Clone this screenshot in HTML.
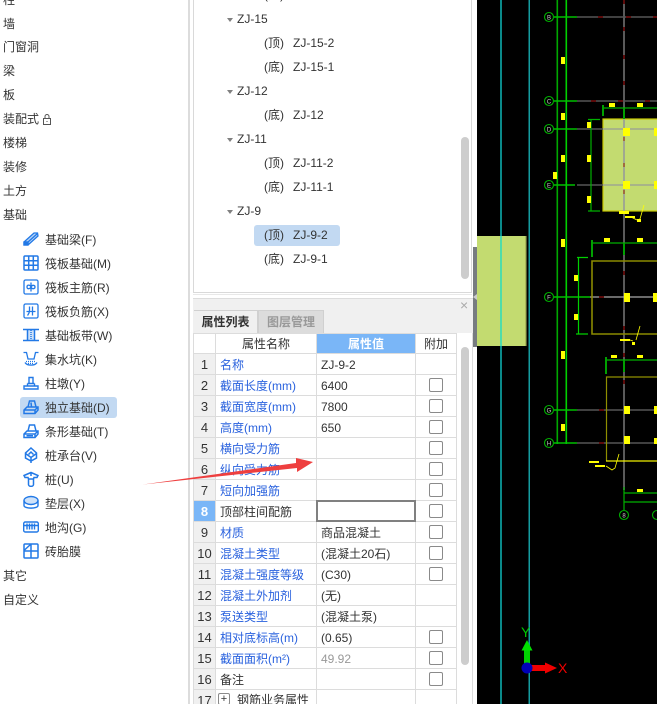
<!DOCTYPE html>
<html><head><meta charset="utf-8"><style>
html,body{margin:0;padding:0;background:#fff;width:657px;height:704px;overflow:hidden}
body{font:12px/20px "Liberation Sans","Noto Sans CJK SC",sans-serif;color:#333}
#w{position:absolute;left:0;top:0;width:657px;height:704px;overflow:hidden;background:#fff}
.t{position:absolute;white-space:nowrap;line-height:20px}
.a{position:absolute}
.ic{position:absolute;left:23px;width:16px;height:16px;fill:none;stroke:#2279e6;stroke-width:1.300}
table{position:absolute;left:193px;top:333px;border-collapse:collapse;table-layout:fixed;width:263px;font-size:12px}
td{border:1px solid #dcdcdc;padding:1px 0 0 4px;height:19px;line-height:18px;white-space:nowrap;overflow:hidden;background:#fff}
td.n{background:#f0f0f0;text-align:center;padding:1px 0 0;font-size:13px}
td.b{color:#2a62de}
td.c{padding:0;height:20px}
td.h{text-align:center;padding:0;height:19px}
i.k{display:block;width:12px;height:12px;border:1px solid #8a8a8a;border-radius:2px;margin:0 auto;background:#fff}
.tri{position:absolute;left:227px;width:0;height:0;border-left:3.500px solid transparent;border-right:3.500px solid transparent;border-top:4px solid #808080}
</style></head><body><div id="w">

<!-- left panel -->
<div class="a" style="left:188px;top:0;width:2px;height:704px;background:#dcdcdc"></div>
<div class="t" style="left:3px;top:-10px">柱</div>
<div class="t" style="left:3px;top:14px">墙</div>
<div class="t" style="left:3px;top:37px">门窗洞</div>
<div class="t" style="left:3px;top:61px">梁</div>
<div class="t" style="left:3px;top:85px">板</div>
<div class="t" style="left:3px;top:109px">装配式</div>
<svg class="a" style="left:42px;top:113px" width="10" height="13" viewBox="0 0 10 13" fill="none" stroke="#555"><rect x="1.500" y="5.500" width="7" height="6"/><path d="M3 5.500V3.500a2 2 0 0 1 4 0V5.500M5 8v1"/></svg>
<div class="t" style="left:3px;top:133px">楼梯</div>
<div class="t" style="left:3px;top:157px">装修</div>
<div class="t" style="left:3px;top:181px">土方</div>
<div class="t" style="left:3px;top:205px">基础</div>
<div class="a" style="left:20px;top:397px;width:97px;height:21px;background:#c2d9f2;border-radius:3px"></div>
<div class="t" style="left:45px;top:230px">基础梁(F)</div>
<div class="t" style="left:45px;top:254px">筏板基础(M)</div>
<div class="t" style="left:45px;top:278px">筏板主筋(R)</div>
<div class="t" style="left:45px;top:302px">筏板负筋(X)</div>
<div class="t" style="left:45px;top:326px">基础板带(W)</div>
<div class="t" style="left:45px;top:350px">集水坑(K)</div>
<div class="t" style="left:45px;top:374px">柱墩(Y)</div>
<div class="t" style="left:45px;top:398px">独立基础(D)</div>
<div class="t" style="left:45px;top:422px">条形基础(T)</div>
<div class="t" style="left:45px;top:446px">桩承台(V)</div>
<div class="t" style="left:45px;top:470px">桩(U)</div>
<div class="t" style="left:45px;top:494px">垫层(X)</div>
<div class="t" style="left:45px;top:518px">地沟(G)</div>
<div class="t" style="left:45px;top:542px">砖胎膜</div>
<div class="t" style="left:3px;top:566px">其它</div>
<div class="t" style="left:3px;top:590px">自定义</div>

<svg class="ic" style="top:231px" viewBox="0 0 16 16"><path d="M1 11L11 2h3.500L15 5 5 14H1Z" fill="#b5d3f7"/><path d="M1 11h4v3M5 11L14.500 2.500"/><rect x="1" y="11" width="4" height="3" fill="#2279e6"/></svg>
<svg class="ic" style="top:255px;stroke-width:1.500" viewBox="0 0 16 16"><rect x="1" y="1" width="14" height="14" rx="1"/><path d="M5.700 1v14M10.300 1v14M1 5.700h14M1 10.300h14"/></svg>
<svg class="ic" style="top:279px" viewBox="0 0 16 16"><rect x="1" y="1" width="14" height="14" rx="1.500"/><path d="M8 3.500v9M8 8C7 5.500 4 5.500 4 8s3 2 4 0c1 2.500 4 2 4 0s-3-2.500-4 0"/></svg>
<svg class="ic" style="top:303px" viewBox="0 0 16 16"><rect x="1" y="1" width="14" height="14" rx="1.500"/><path d="M6.500 3.500v4c0 2.500-1 3.500-2 5M9.500 3.500v9M3.500 8.500h9"/></svg>
<svg class="ic" style="top:327px;stroke-width:1.500" viewBox="0 0 16 16"><rect x="4.500" y="2.500" width="7" height="11" fill="#cfe2f9" stroke="none"/><path d="M0 2.500h16M0 13.500h16M4.500 3v10M11.500 3v10"/><path d="M8 3v10" stroke-dasharray="1 1"/></svg>
<svg class="ic" style="top:351px" viewBox="0 0 16 16"><path d="M0.500 1.500h3L5 8h6l1.500-6.500h3"/><path d="M2 11.500c2 3.500 10 3.500 12 0"/><path d="M3 10.500h10M5 12.500h6" stroke-dasharray="1 1"/></svg>
<svg class="ic" style="top:375px;stroke-width:1.400" viewBox="0 0 16 16"><path d="M6 2.500h4v6H6ZM4.500 8.500h7M4.500 8.500V11M11.500 8.500V11M1 11h14v3H1Z"/></svg>
<svg class="ic" style="top:399px;stroke-width:1.500" viewBox="0 0 16 16"><path d="M1 14.500V11l3-3h11v3l-3 3.500ZM1 11h11v3.500M12 11l3-3M5 8l1.500-6h5L13 8M8 3.500 8.500 8"/></svg>
<svg class="ic" style="top:423px;stroke-width:1.500" viewBox="0 0 16 16"><path d="M1 14.500V11l3-3h11v3l-3 3.500ZM1 11h11v3.500M12 11l3-3M5 8l1.500-6h5L13 8M3.500 12.800h6.500"/></svg>
<svg class="ic" style="top:447px;stroke-width:1.500" viewBox="0 0 16 16"><path d="M8 1l5.500 5v5L8 14 2.500 11V6ZM2.500 6.500 8 10.500l5.500-4M8 10v6M5.500 7.500 8 5l2.500 2.500"/></svg>
<svg class="ic" style="top:471px;stroke-width:1.500" viewBox="0 0 16 16"><path d="M1 4.500 8 1.500l7 3-1 2H11L10.500 8h-5L5 6.500H2ZM5.500 8v5.500c0 2.500 5 2.500 5 0V8M8 2v3"/></svg>
<svg class="ic" style="top:495px;stroke-width:1.400" viewBox="0 0 16 16"><ellipse cx="8" cy="5.500" rx="7" ry="4" fill="#cfe2f9"/><path d="M1 5.500v5c0 3.500 14 3.500 14 0v-5"/></svg>
<svg class="ic" style="top:519px;stroke-width:1.400" viewBox="0 0 16 16"><rect x="0.700" y="3" width="14.600" height="10" rx="1.500"/><path d="M1 6.500h14M4 4.500v6M6.500 4.500v6M9 4.500v6M11.500 4.500v6"/></svg>
<svg class="ic" style="top:543px;stroke-width:1.500" viewBox="0 0 16 16"><rect x="1" y="1" width="14" height="14" rx="1"/><path d="M8 1v14M1 8h14M1.500 7 7.500 1.500"/></svg>

<!-- tree panel -->
<div class="a" style="left:193px;top:-2px;width:279px;height:295px;border:1px solid #d9d9d9;box-sizing:border-box"></div>
<div class="a" style="left:193px;top:294px;width:279px;height:1px;background:#e8e8e8"></div>
<div class="a" style="left:254px;top:225px;width:86px;height:21px;background:#c2d9f2;border-radius:3px"></div>
<div class="t" style="left:264px;top:-15px">(底)&nbsp;&nbsp;ZJ-15-3</div>
<span class="tri" style="top:18px"></span><div class="t" style="left:237px;top:9px">ZJ-15</div>
<div class="t" style="left:264px;top:33px">(顶)</div><div class="t" style="left:293px;top:33px">ZJ-15-2</div>
<div class="t" style="left:264px;top:57px">(底)</div><div class="t" style="left:293px;top:57px">ZJ-15-1</div>
<span class="tri" style="top:90px"></span><div class="t" style="left:237px;top:81px">ZJ-12</div>
<div class="t" style="left:264px;top:105px">(底)</div><div class="t" style="left:293px;top:105px">ZJ-12</div>
<span class="tri" style="top:138px"></span><div class="t" style="left:237px;top:129px">ZJ-11</div>
<div class="t" style="left:264px;top:153px">(顶)</div><div class="t" style="left:293px;top:153px">ZJ-11-2</div>
<div class="t" style="left:264px;top:177px">(底)</div><div class="t" style="left:293px;top:177px">ZJ-11-1</div>
<span class="tri" style="top:210px"></span><div class="t" style="left:237px;top:201px">ZJ-9</div>
<div class="t" style="left:264px;top:225px">(顶)</div><div class="t" style="left:293px;top:225px">ZJ-9-2</div>
<div class="t" style="left:264px;top:249px">(底)</div><div class="t" style="left:293px;top:249px">ZJ-9-1</div>
<div class="a" style="left:461px;top:137px;width:8px;height:142px;background:#cdcdcd;border-radius:4px"></div>

<!-- property panel -->
<div class="a" style="left:193px;top:298px;width:280px;height:406px;border-left:1px solid #dcdcdc;border-right:1px solid #dcdcdc;box-sizing:border-box"></div>
<div class="a" style="left:193px;top:298px;width:280px;height:35px;background:#f0f0f0;border-top:1px solid #dcdcdc;box-sizing:border-box"></div>
<div class="t" style="left:460px;top:295px;color:#aaa;font-size:14px">×</div>
<div class="a" style="left:194px;top:310px;width:64px;height:23px;background:#f0f0f0;border-top:1px solid #d0d0d0;border-right:1px solid #d0d0d0;box-sizing:border-box;text-align:center;font-weight:bold;line-height:22px">属性列表</div>
<div class="a" style="left:258px;top:310px;width:66px;height:23px;background:#dcdcdc;border:1px solid #d0d0d0;border-bottom:0;box-sizing:border-box;text-align:center;font-weight:bold;color:#999;line-height:22px">图层管理</div>
<table><colgroup><col style="width:22px"><col style="width:101px"><col style="width:99px"><col style="width:41px"></colgroup>
<tr><td class="h"></td><td class="h">属性名称</td><td class="h" style="background:#7ab6f7;color:#fff;font-weight:bold">属性值</td><td class="h">附加</td></tr>
<tr><td class="n">1</td><td class="b">名称</td><td>ZJ-9-2</td><td class="c"></td></tr>
<tr><td class="n">2</td><td class="b">截面长度(mm)</td><td>6400</td><td class="c"><i class="k"></i></td></tr>
<tr><td class="n">3</td><td class="b">截面宽度(mm)</td><td>7800</td><td class="c"><i class="k"></i></td></tr>
<tr><td class="n">4</td><td class="b">高度(mm)</td><td>650</td><td class="c"><i class="k"></i></td></tr>
<tr><td class="n">5</td><td class="b">横向受力筋</td><td></td><td class="c"><i class="k"></i></td></tr>
<tr><td class="n">6</td><td class="b">纵向受力筋</td><td></td><td class="c"><i class="k"></i></td></tr>
<tr><td class="n">7</td><td class="b">短向加强筋</td><td></td><td class="c"><i class="k"></i></td></tr>
<tr><td class="n" style="background:#7ab6f7;color:#fff;font-weight:bold">8</td><td>顶部柱间配筋</td><td></td><td class="c"><i class="k"></i></td></tr>
<tr><td class="n">9</td><td class="b">材质</td><td>商品混凝土</td><td class="c"><i class="k"></i></td></tr>
<tr><td class="n">10</td><td class="b">混凝土类型</td><td>(混凝土20石)</td><td class="c"><i class="k"></i></td></tr>
<tr><td class="n">11</td><td class="b">混凝土强度等级</td><td>(C30)</td><td class="c"><i class="k"></i></td></tr>
<tr><td class="n">12</td><td class="b">混凝土外加剂</td><td>(无)</td><td class="c"></td></tr>
<tr><td class="n">13</td><td class="b">泵送类型</td><td>(混凝土泵)</td><td class="c"></td></tr>
<tr><td class="n">14</td><td class="b">相对底标高(m)</td><td>(0.65)</td><td class="c"><i class="k"></i></td></tr>
<tr><td class="n">15</td><td class="b">截面面积(m²)</td><td style="color:#999">49.92</td><td class="c"><i class="k"></i></td></tr>
<tr><td class="n">16</td><td>备注</td><td></td><td class="c"><i class="k"></i></td></tr>
<tr><td class="n">17</td><td></td><td></td><td class="c"></td></tr>
</table>
<div class="a" style="left:316px;top:500px;width:100px;height:22px;border:2px solid #808080;box-sizing:border-box"></div>
<div class="a" style="left:218px;top:693px;width:12px;height:12px;border:1px solid #8a8a8a;border-radius:2px;box-sizing:border-box;text-align:center;line-height:10px;font-size:11px;background:#fff">+</div>
<div class="t" style="left:237px;top:690px">钢筋业务属性</div>
<div class="a" style="left:461px;top:347px;width:8px;height:318px;background:#cdcdcd;border-radius:4px"></div>

<!-- CAD -->
<svg class="a" style="left:473px;top:0" width="184" height="704" viewBox="473 0 184 704" font-family="Liberation Sans">
<rect x="477" y="0" width="180" height="704" fill="#000"/>
<rect x="473" y="247" width="4" height="100" fill="#777c80"/>
<path d="M473 297l4-3v6Z" fill="#ccc"/>
<rect x="477" y="236" width="48" height="110" fill="#c3db70"/>
<rect x="525" y="236" width="1.500" height="110" fill="#a8b85a"/>
<rect x="500" y="0" width="2" height="704" fill="#0a8a8a"/>
<rect x="500" y="236" width="2" height="110" fill="#4fdcaa"/>
<rect x="528.500" y="0" width="1.500" height="704" fill="#159ca0"/>
<rect x="556.500" y="0" width="1.600" height="444" fill="#00a800"/>
<rect x="565.500" y="0" width="1.600" height="444" fill="#00d000"/>
<!-- green block -->
<rect x="603" y="119" width="60" height="92" fill="#c3db70" stroke="#c8c800" stroke-width="1.200"/>
<!-- gray lines -->
<g stroke="#5a5a5a" stroke-width="2"><path d="M624 0V490"/></g>
<g stroke="#a0a890" stroke-width="2"><path d="M624 119V211"/></g>
<g stroke="#555" stroke-width="1.400"><path d="M577 17H657M577 101H657M577 129H603M577 185H603M577 410H657M577 443H657"/></g>
<path d="M603 129H657M603 185H657" stroke="#a0a890" stroke-width="1.600"/>
<path d="M590 297H657" stroke="#aaa" stroke-width="1.200"/>
<g stroke="#00c000" stroke-width="1.400"><path d="M554 17H577M554 101H577M554 129H577M554 185H575M554 297H590M554 410H577M554 443H577"/></g>
<!-- red-brown dashes -->
<g fill="#5c0a0a">
<rect x="598" y="16" width="5" height="2"/><rect x="626" y="16" width="5" height="2"/><rect x="653" y="16" width="4" height="2"/>
<rect x="591" y="100" width="5" height="2"/><rect x="618" y="100" width="5" height="2"/><rect x="645" y="100" width="5" height="2"/>
<rect x="599" y="296" width="5" height="2"/><rect x="599" y="409" width="5" height="2"/><rect x="599" y="442" width="5" height="2"/>
<rect x="623" y="0" width="2" height="4"/><rect x="623" y="27" width="2" height="4"/><rect x="623" y="55" width="2" height="4"/><rect x="623" y="81" width="2" height="4"/>
<rect x="623" y="271" width="2" height="4"/><rect x="623" y="326" width="2" height="4"/><rect x="623" y="353" width="2" height="4"/><rect x="623" y="380" width="2" height="4"/>
</g>
<g fill="#a06a40">
<rect x="623" y="137" width="2" height="4"/><rect x="623" y="163" width="2" height="4"/><rect x="623" y="190" width="2" height="4"/>
</g>
<!-- dimension lines -->
<g fill="none" stroke="#00b000" stroke-width="1.200">
<path d="M603 108H657M591 120V211M588 119.500H600M588 211H600"/>
<path d="M592 243H657M606 360H657M624 493H657M624 502H657M624 487V510"/>
<path d="M578.500 257V334M577 257.500H588M576 334H588" stroke="#00d000"/>
</g>
<rect x="602" y="105" width="2" height="11" fill="#00a000"/><rect x="591" y="240" width="2" height="17" fill="#00a000"/><rect x="605" y="357" width="2" height="17" fill="#00a000"/>
<rect x="623" y="108" width="2" height="11" fill="#00a000"/><rect x="623" y="243" width="2" height="12" fill="#00a000"/><rect x="623" y="360" width="2" height="12" fill="#00a000"/>
<!-- olive rects -->
<path d="M657 261H592V334H657" fill="none" stroke="#8a8a00" stroke-width="1.600"/>
<path d="M657 377H606.500V461" fill="none" stroke="#8f8f00" stroke-width="1.200"/>
<path d="M606 461H657" stroke="#f0f000" stroke-width="1.200"/>
<!-- yellow squares -->
<g fill="#ffff00">
<rect x="623" y="128" width="7" height="8"/><rect x="654" y="128" width="3" height="8"/>
<rect x="623" y="181" width="7" height="8"/><rect x="654" y="181" width="3" height="8"/>
<rect x="624" y="293" width="6" height="9"/><rect x="653" y="293" width="4" height="9"/>
<rect x="624" y="406" width="6" height="8"/><rect x="654" y="406" width="3" height="8"/>
<rect x="624" y="436" width="6" height="8"/><rect x="654" y="438" width="3" height="6"/>
<!-- small dim texts -->
<rect x="561" y="57" width="4" height="7"/><rect x="561" y="113" width="4" height="7"/><rect x="561" y="155" width="4" height="7"/>
<rect x="553" y="172" width="4" height="7"/><rect x="561" y="239" width="4" height="8"/><rect x="561" y="351" width="4" height="8"/><rect x="561" y="424" width="4" height="7"/>
<rect x="587" y="122" width="4" height="6"/><rect x="587" y="155" width="4" height="7"/><rect x="587" y="196" width="4" height="7"/>
<rect x="609" y="103" width="6" height="4"/><rect x="637" y="103" width="6" height="4"/>
<rect x="604" y="238" width="6" height="4"/><rect x="637" y="238" width="6" height="4"/>
<rect x="574" y="275" width="4" height="6"/><rect x="574" y="314" width="4" height="6"/>
<rect x="611" y="355" width="6" height="3"/><rect x="637" y="355" width="6" height="3"/>
<rect x="637" y="489" width="6" height="3"/>
<rect x="619" y="211" width="10" height="3"/><rect x="625" y="216" width="10" height="2"/><rect x="637" y="219" width="4" height="3"/>
<rect x="620" y="339" width="10" height="2"/><rect x="632" y="342" width="3" height="3"/><rect x="589" y="461" width="10" height="2"/><rect x="595" y="465" width="10" height="2"/>
</g>
<g fill="none" stroke="#ffff00" stroke-width="0.800"><path d="M631 217l6 3 3-1 4-14M630 340l3 1M636 340l4-14M606 466l6 4 3-2 4-14"/></g>
<!-- axis circles -->
<g fill="#000" stroke="#00b000" stroke-width="1.100">
<circle cx="549" cy="17" r="4.500"/><circle cx="549" cy="101" r="4.500"/><circle cx="549" cy="129" r="4.500"/><circle cx="549" cy="185" r="4.500"/><circle cx="549" cy="297" r="4.500"/><circle cx="549" cy="410" r="4.500"/><circle cx="549" cy="443" r="4.500"/><circle cx="624" cy="515" r="4.500"/><circle cx="657" cy="515" r="4.500"/>
</g>
<g fill="#ccc" font-size="6" text-anchor="middle">
<text x="549" y="19.500">B</text><text x="549" y="103.500">C</text><text x="549" y="131.500">D</text><text x="549" y="187.500">E</text><text x="549" y="299.500">F</text><text x="549" y="412.500">G</text><text x="549" y="445.500">H</text><text x="624" y="517.500">8</text>
</g>
<!-- axes -->
<rect x="524" y="648" width="6" height="20" fill="#00d000"/>
<path d="M527 640l5.500 10.500h-11Z" fill="#00e000"/>
<rect x="527" y="665" width="20" height="6" fill="#f00000"/>
<path d="M557 668l-12-5.500v11Z" fill="#f00000"/>
<circle cx="527" cy="668" r="5.500" fill="#0000b8"/>
<text x="521" y="637" fill="#00c800" font-size="14">Y</text>
<text x="558" y="673" fill="#f00000" font-size="14">X</text>
</svg>

<!-- red annotation arrow -->
<svg class="a" style="left:0;top:0" width="657" height="704"><path d="M143 484.500L296 463 296 458 313 462 297 472 297 468Z" fill="#ee3f3f"/></svg>
</div></body></html>
